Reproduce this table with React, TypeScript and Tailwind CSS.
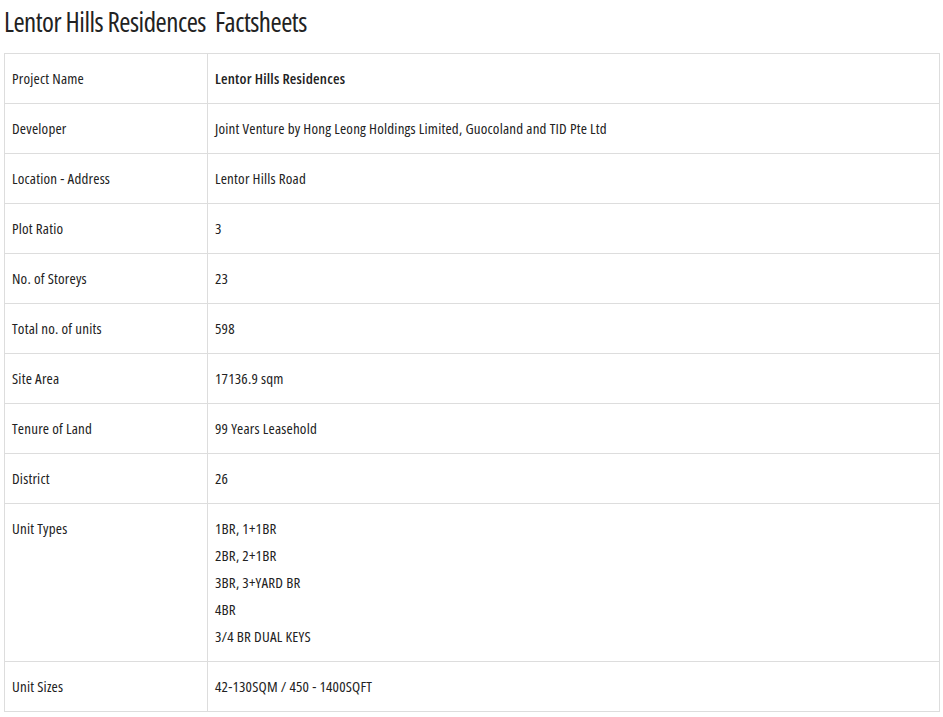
import React from "react";

const rows: { label: string; value: React.ReactNode; bold?: boolean }[] = [
  { label: "Project Name", value: "Lentor Hills Residences", bold: true },
  { label: "Developer", value: "Joint Venture by Hong Leong Holdings Limited, Guocoland and TID Pte Ltd" },
  { label: "Location - Address", value: "Lentor Hills Road" },
  { label: "Plot Ratio", value: "3" },
  { label: "No. of Storeys", value: "23" },
  { label: "Total no. of units", value: "598" },
  { label: "Site Area", value: "17136.9 sqm" },
  { label: "Tenure of Land", value: "99 Years Leasehold" },
  { label: "District", value: "26" },
  {
    label: "Unit Types",
    value: (
      <>
        1BR, 1+1BR
        <br />
        2BR, 2+1BR
        <br />
        3BR, 3+YARD BR
        <br />
        4BR
        <br />
        3/4 BR DUAL KEYS
      </>
    ),
  },
  { label: "Unit Sizes", value: "42-130SQM / 450 - 1400SQFT" },
];

export default function App() {
  return (
    <div className="min-h-[717px] w-[943px] bg-white px-1 pt-0 font-['Open_Sans',sans-serif] text-[#222] [font-stretch:condensed]">
      <h2 className="pt-[2px] text-[27px] leading-[40px] font-normal tracking-[-0.5px]">
        Lentor Hills Residences&nbsp; Factsheets
      </h2>
      <table className="mt-[11px] w-[936px] border-collapse text-[15px] tracking-[0.2px]">
        <tbody>
          {rows.map((r) => (
            <tr key={r.label}>
              <td className="w-[203px] border border-[#ddd] px-[7px] py-[11px] align-top leading-[27px]">{r.label}</td>
              <td className={`border border-[#ddd] px-[7px] py-[11px] align-top leading-[27px] ${r.bold ? "font-semibold" : ""}`}>
                {r.value}
              </td>
            </tr>
          ))}
        </tbody>
      </table>
    </div>
  );
}
